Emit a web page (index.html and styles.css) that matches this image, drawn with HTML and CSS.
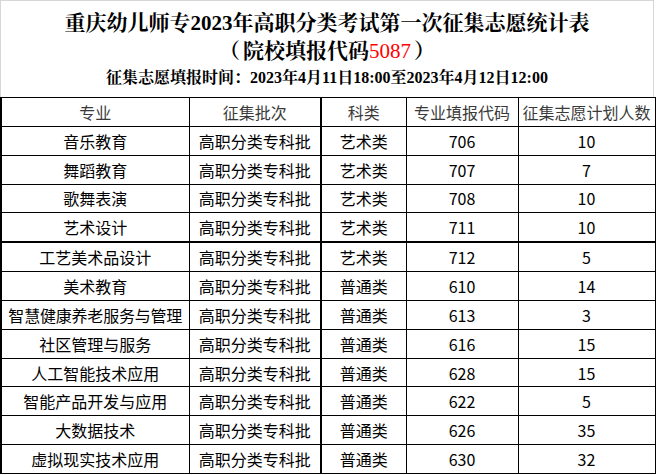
FILE: index.html
```html
<!DOCTYPE html>
<html lang="zh-CN">
<head>
<meta charset="utf-8">
<title>征集志愿统计表</title>
<link rel="stylesheet" href="styles.css">
</head>
<body>
<div class="sheet">
  <div class="title-box">
    <div class="title-1">重庆幼儿师专2023年高职分类考试第一次征集志愿统计表</div>
    <div class="title-2"><span class="paren">（</span>院校填报代码<span class="red">5087</span><span class="paren">）</span></div>
    <div class="title-3">征集志愿填报时间：2023年4月11日18:00至2023年4月12日12:00</div>
  </div>
  <table class="grid">
    <colgroup>
      <col class="c1"><col class="c2"><col class="c3"><col class="c4"><col class="c5">
    </colgroup>
    <thead>
      <tr class="head"><td>专业</td><td>征集批次</td><td>科类</td><td>专业填报代码</td><td>征集志愿计划人数</td></tr>
    </thead>
    <tbody>
      <tr><td>音乐教育</td><td>高职分类专科批</td><td>艺术类</td><td>706</td><td>10</td></tr>
      <tr><td>舞蹈教育</td><td>高职分类专科批</td><td>艺术类</td><td>707</td><td>7</td></tr>
      <tr><td>歌舞表演</td><td>高职分类专科批</td><td>艺术类</td><td>708</td><td>10</td></tr>
      <tr><td>艺术设计</td><td>高职分类专科批</td><td>艺术类</td><td>711</td><td>10</td></tr>
      <tr class="sep"><td>工艺美术品设计</td><td>高职分类专科批</td><td>艺术类</td><td>712</td><td>5</td></tr>
      <tr><td>美术教育</td><td>高职分类专科批</td><td>普通类</td><td>610</td><td>14</td></tr>
      <tr><td class="tight">智慧健康养老服务与管理</td><td>高职分类专科批</td><td>普通类</td><td>613</td><td>3</td></tr>
      <tr><td>社区管理与服务</td><td>高职分类专科批</td><td>普通类</td><td>616</td><td>15</td></tr>
      <tr><td>人工智能技术应用</td><td>高职分类专科批</td><td>普通类</td><td>628</td><td>15</td></tr>
      <tr><td>智能产品开发与应用</td><td>高职分类专科批</td><td>普通类</td><td>622</td><td>5</td></tr>
      <tr><td>大数据技术</td><td>高职分类专科批</td><td>普通类</td><td>626</td><td>35</td></tr>
      <tr><td>虚拟现实技术应用</td><td>高职分类专科批</td><td>普通类</td><td>630</td><td>32</td></tr>
    </tbody>
  </table>
</div>
</body>
</html>
```

FILE: styles.css
```css
html, body {
  margin: 0;
  padding: 0;
  background: #ffffff;
}

.sheet {
  width: 654px;
}

.title-box {
  height: 96px;
  border-top: 1px solid #d6d6d6;
  border-left: 1px solid #d6d6d6;
  border-right: 1px solid #d6d6d6;
  box-sizing: content-box;
  text-align: center;
  color: #000;
  font-family: "Liberation Serif", "Noto Serif CJK SC", "Noto Sans CJK SC", serif;
  font-weight: bold;
}

.title-1 {
  padding-top: 9px;
  height: 26px;
  line-height: 26px;
  font-size: 21px;
}

.title-2 {
  margin-top: 2px;
  height: 26px;
  line-height: 26px;
  font-size: 21px;
}

.title-2 .paren {
  padding: 0 3px;
}

.title-2 .red {
  color: #ff0000;
  font-weight: normal;
}

.title-3 {
  margin-top: 3px;
  height: 22px;
  line-height: 22px;
  font-size: 16px;
}

.grid {
  width: 654px;
  table-layout: fixed;
  border-collapse: collapse;
  font-family: "Noto Sans CJK SC", "Noto Sans", sans-serif;
  font-size: 16px;
  color: #000;
}

.c1 { width: 188px; }
.c2 { width: 132px; }
.c3 { width: 85px; }
.c4 { width: 112px; }
.c5 { width: 137px; }

.grid td {
  height: 27.85px;
  padding: 0;
  border: 1px solid #000;
  text-align: center;
  vertical-align: middle;
  line-height: 20px;
  white-space: nowrap;
  overflow: hidden;
}

.grid td:first-child {
  border-left: 2px solid #000;
}

.grid td:nth-child(3) {
  border-left: 2px solid #000;
}

.grid .head td {
  color: #3a3a3a;
}

.grid .sep td {
  border-top: 2px solid #000;
}

.grid td.tight {
  letter-spacing: -0.2px;
}
```
